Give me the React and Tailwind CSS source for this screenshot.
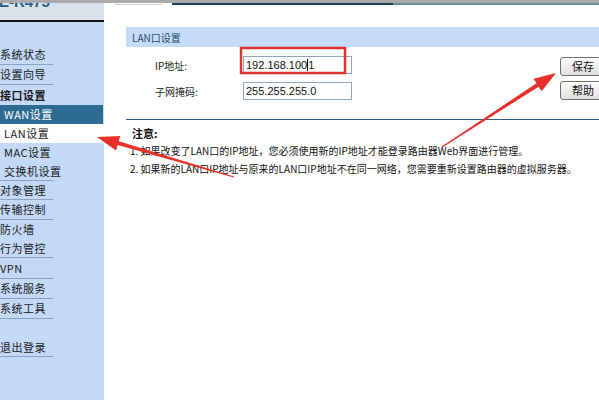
const cjk = "font-['Noto_Sans_CJK_SC','Liberation_Sans',sans-serif]"

function arrowPoints(tx, ty, hx, hy, headLen = 22, headW = 15, tailW = 1.2, neckW = 4) {
  const dx = hx - tx, dy = hy - ty
  const len = Math.hypot(dx, dy)
  const ux = dx / len, uy = dy / len
  const px = -uy, py = ux
  const bx = hx - ux * headLen, by = hy - uy * headLen
  const pts = [
    [tx + px * tailW / 2, ty + py * tailW / 2],
    [bx + px * neckW / 2, by + py * neckW / 2],
    [bx + px * headW / 2, by + py * headW / 2],
    [hx, hy],
    [bx - px * headW / 2, by - py * headW / 2],
    [bx - px * neckW / 2, by - py * neckW / 2],
    [tx - px * tailW / 2, ty - py * tailW / 2],
  ]
  return pts.map(p => p.map(n => n.toFixed(1)).join(',')).join(' ')
}

function MenuItem({ label, sub, line, bold, active, white, h }) {
  return (
    <div className={`${h} flex flex-col ${active ? 'bg-[#2e6b92] text-white w-[103px]' : ''} ${white ? 'bg-white w-[104px]' : ''}`}>
      <div className={`flex-1 flex items-center ${sub ? 'pl-[4px]' : 'pl-0'} ${bold ? 'font-bold' : ''}`}>{label}</div>
      {line && <div className="h-px w-[53px] bg-[#8da2bc]" />}
    </div>
  )
}

function Sidebar() {
  const items = [
    { label: '系统状态', line: true, h: 'h-[20px]' },
    { label: '设置向导', line: true, h: 'h-[20px]' },
    { label: '接口设置', bold: true, h: 'h-[20px]' },
    { label: 'WAN设置', sub: true, active: true, h: 'h-[19px]' },
    { label: 'LAN设置', sub: true, white: true, h: 'h-[19px]' },
    { label: 'MAC设置', sub: true, h: 'h-[19px]' },
    { label: '交换机设置', sub: true, line: true, h: 'h-[19px]' },
    { label: '对象管理', line: true, h: 'h-[19px]' },
    { label: '传输控制', line: true, h: 'h-[20px]' },
    { label: '防火墙', h: 'h-[19px]' },
    { label: '行为管控', line: true, h: 'h-[19px]' },
    { label: 'VPN', line: true, h: 'h-[21px]' },
    { label: '系统服务', line: true, h: 'h-[20px]' },
    { label: '系统工具', line: true, h: 'h-[20px]' },
    { label: '', h: 'h-[19px]' },
    { label: '退出登录', line: true, h: 'h-[19px]' },
  ]
  return (
    <div className="w-[104px] shrink-0 bg-[#c4d8f7] flex flex-col">
      <div className="h-[17px] bg-[#d9e2eb] overflow-hidden">
        <div className="-mt-[9px] -ml-[1px] text-[15px] font-bold leading-none text-[#2c5a84] font-['Liberation_Sans',sans-serif]">E-R475</div>
      </div>
      <div className="h-[2px] bg-[#111]" />
      <div className="pt-[23px] text-[11px] tracking-[0.5px] text-[#1a1a1a]">
        {items.map((it, i) => <MenuItem key={i} {...it} />)}
      </div>
    </div>
  )
}

function Field({ label, value, caret }) {
  return (
    <div className="flex items-center h-[18px]">
      <div className="w-[88px] text-[10px] text-[#222]">{label}</div>
      <div className="w-[109px] h-[18px] border border-[#8fa6bf] bg-white flex items-center pl-[2px] text-[11px] text-[#111] font-['Liberation_Sans',sans-serif]">
        {caret ? (
          <>
            <span>192.168.100</span>
            <span className="inline-block w-px h-[12px] bg-black" />
            <span>1</span>
          </>
        ) : value}
      </div>
    </div>
  )
}

function Btn({ children }) {
  return (
    <div className="h-[19px] w-[46px] rounded-[3px] border border-[#6e6e6e] bg-gradient-to-b from-[#fdfdfd] to-[#e0e0e0] flex items-center justify-center text-[11px] text-[#111]">
      {children}
    </div>
  )
}

export default function App() {
  return (
    <div className={`relative w-[599px] h-[400px] overflow-hidden bg-white ${cjk}`}>
      <div className="h-[3px] bg-[#a9abad]" />
      <div className="flex h-[397px]">
        <Sidebar />
        <div className="flex-1 flex flex-col overflow-hidden">
          <div className="flex items-start h-[3px]">
            <div className="ml-[11px] mt-[1px] w-[47px] h-px bg-[#c9cfd5]" />
            <div className="ml-[10px] w-[221px] h-[2px] bg-[#1d3d5b]" />
            <div className="flex-1 h-[2px] bg-[#6a8e9c]" />
          </div>
          <div className="pl-[22px] pt-[21px]">
            <div className="h-[20px] bg-[#c6dbf8] flex items-center pl-[6px] text-[10px] text-[#274b6e]">LAN口设置</div>
            <div className="flex pt-[9px]">
              <div className="pl-[29px] flex flex-col gap-[8px]">
                <Field label="IP地址:" caret />
                <Field label="子网掩码:" value="255.255.255.0" />
              </div>
              <div className="ml-auto -mr-[7px] pt-px flex flex-col gap-[5px] shrink-0">
                <Btn>保存</Btn>
                <Btn>帮助</Btn>
              </div>
            </div>
            <div className="mt-[19px] h-px bg-[#2a5d8c]" />
            <div className="pt-[4px] text-[10px] text-[#111] leading-[18px]">
              <div className="pl-[6px] font-bold text-[11px]">注意:</div>
              <div className="pl-[4px] whitespace-nowrap">1. 如果改变了LAN口的IP地址，您必须使用新的IP地址才能登录路由器Web界面进行管理。</div>
              <div className="pl-[4px] whitespace-nowrap">2. 如果新的LAN口IP地址与原来的LAN口IP地址不在同一网络，您需要重新设置路由器的虚拟服务器。</div>
            </div>
          </div>
        </div>
      </div>
      <svg className="absolute inset-0 pointer-events-none" width="599" height="400" viewBox="0 0 599 400">
        <rect x="241" y="48" width="104" height="25" fill="none" stroke="#e4322f" strokeWidth="2.5" />
        <polygon points={arrowPoints(234, 177, 97, 137)} fill="#e8302a" />
        <polygon points={arrowPoints(442, 147, 556, 73)} fill="#e8302a" />
      </svg>
    </div>
  )
}
